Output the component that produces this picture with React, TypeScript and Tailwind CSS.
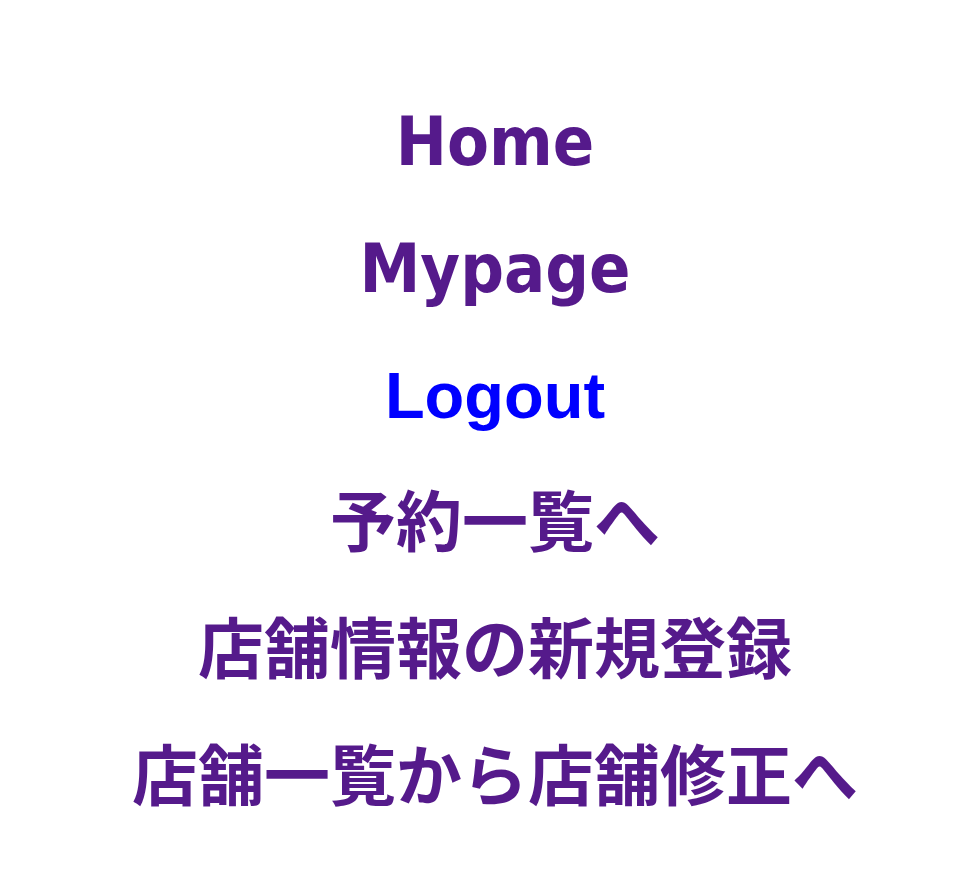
const links = [
  { label: 'Home', visited: true, kind: 'latin' },
  { label: 'Mypage', visited: true, kind: 'latin' },
  { label: 'Logout', visited: false, kind: 'arial' },
  { label: '予約一覧へ', visited: true, kind: 'cjk' },
  { label: '店舗情報の新規登録', visited: true, kind: 'cjk' },
  { label: '店舗一覧から店舗修正へ', visited: true, kind: 'cjk' },
];

const styles: Record<string, string> = {
  latin:
    "leading-[127px] font-['DejaVu_Sans_Condensed','DejaVu_Sans',sans-serif] text-[68px] font-bold [font-stretch:condensed]",
  arial: "leading-[127px] font-['Liberation_Sans',Arial,sans-serif] text-[65px] font-bold",
  cjk: "leading-[117px] font-['Noto_Sans_CJK_JP',sans-serif] text-[66px] font-bold",
};

export default function App() {
  return (
    <div className="min-h-[881px] bg-white pt-[78px] pl-[30px]">
      <ul className="flex flex-col items-center">
        {links.map((l) => (
          <li key={l.label} className={'h-[127px] ' + styles[l.kind]}>
            <a href="#" className={l.visited ? 'text-[#551a8b]' : 'text-[#0000ff]'}>
              {l.label}
            </a>
          </li>
        ))}
      </ul>
    </div>
  );
}
